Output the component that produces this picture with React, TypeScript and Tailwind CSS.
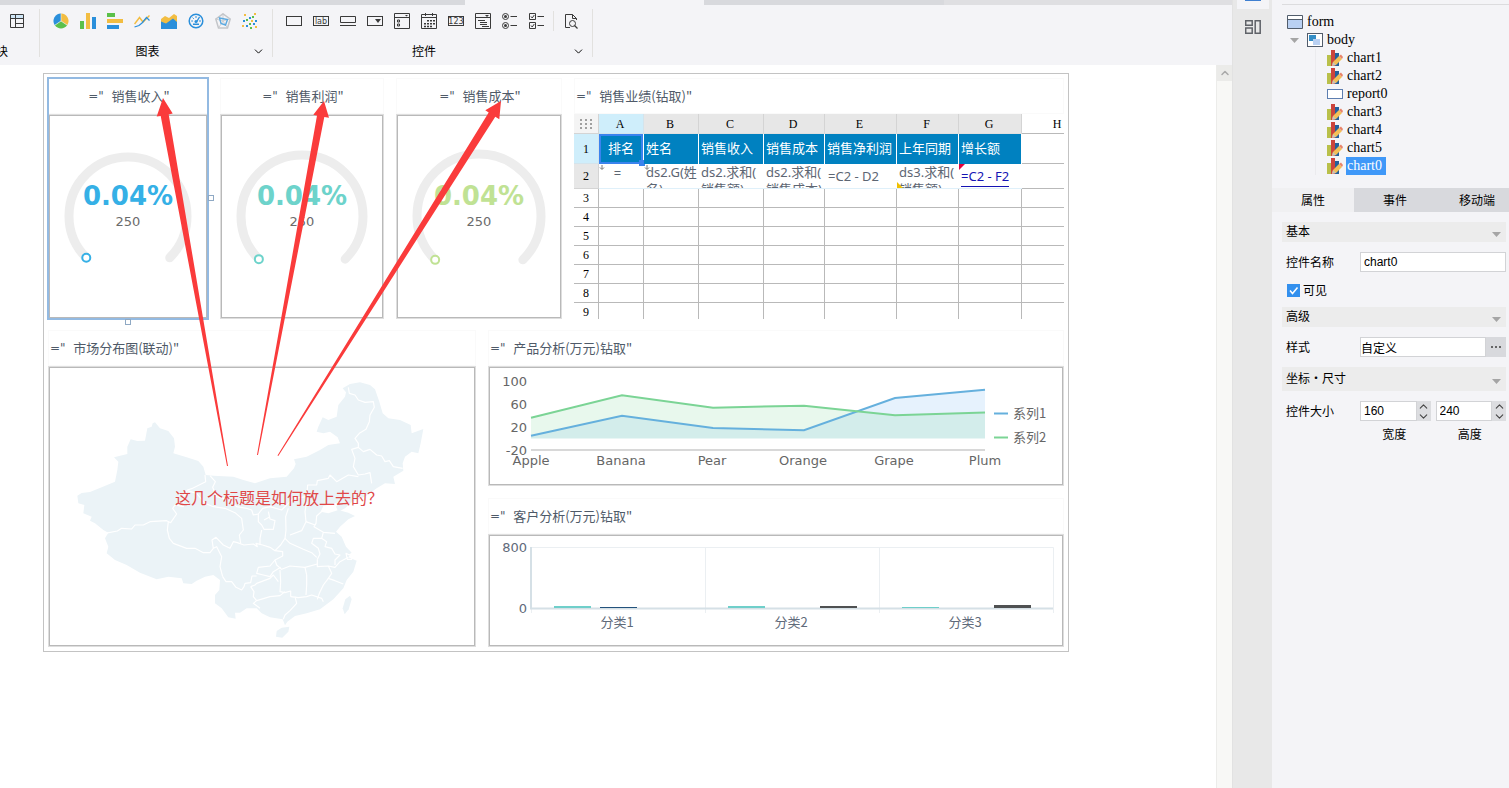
import React, { useState } from "react";
import { ChevronDown, ChevronUp } from "lucide-react";

const ink = "#3a3a3a";

function Ico({ children, label }: { children: React.ReactNode; label: string }) {
  return (
    <button type="button" aria-label={label} className="flex h-6 w-[27px] items-center justify-center">
      <svg width="16" height="16" viewBox="0 0 16 16" fill="none">
        {children}
      </svg>
    </button>
  );
}

function ChartIcons() {
  const blue = "#2a8fdb";
  const yellow = "#f2bd42";
  const green = "#5bc04a";
  return (
    <>
      <Ico label="饼图">
        <path d="M8 8 V0.5 A7.5 7.5 0 0 0 1.8 12.2 Z" fill={blue} />
        <path d="M8 8 V0.5 A7.5 7.5 0 0 1 14.2 12.2 Z" fill={yellow} />
        <path d="M8 8 L1.8 12.2 A7.5 7.5 0 0 0 14.2 12.2 Z" fill={green} />
        <path d="M8 0.5 V8 L1.8 12.2 M8 8 L14.2 12.2" stroke="#f4f4f7" strokeWidth="0.6" />
      </Ico>
      <Ico label="柱形图">
        <rect x="0" y="8" width="4" height="8" fill={green} />
        <rect x="6" y="0" width="4" height="16" fill={yellow} />
        <rect x="12" y="4" width="4" height="12" fill={blue} />
      </Ico>
      <Ico label="条形图">
        <rect x="0" y="0" width="8" height="4" fill={green} />
        <rect x="0" y="6" width="16" height="4" fill={yellow} />
        <rect x="0" y="12" width="12" height="4" fill={blue} />
      </Ico>
      <Ico label="折线图">
        <path d="M0.5 11 L5.500 4.500 L9 9 L15.500 2.500" stroke={yellow} strokeWidth="1.5" />
        <path d="M0.500 14 L5 12.500 L8 10 L12.500 4.500 L15.500 7.500" stroke={blue} strokeWidth="1.2" />
      </Ico>
      <Ico label="面积图">
        <path d="M0 6 L4 3 L8 5 L13 1 L16 3 V12 H0 Z" fill={yellow} />
        <path d="M0 8.5 L5 10.5 L12 5.5 L16 9 V16 H0 Z" fill={blue} />
      </Ico>
      <Ico label="仪表盘">
        <circle cx="8" cy="8" r="6.8" stroke={blue} strokeWidth="1.5" />
        <path d="M8 3 V5 M3.2 8 H5 M11 8 H13 M4.6 4.6 L5.8 5.8" stroke={blue} />
        <path d="M11.500 4 L8.500 9" stroke={blue} strokeWidth="1.4" />
        <rect x="5" y="10.500" width="6" height="1.500" fill={blue} />
        <circle cx="8" cy="8.500" r="1.500" fill={blue} />
      </Ico>
      <Ico label="雷达图">
        <path d="M8 0.8 L15.2 6 L12.5 15 H3.5 L0.8 6 Z" stroke="#c4c6ca" strokeWidth="1.5" />
        <path d="M8 0.8 V8 M15.2 6 L8 8 L12.5 15 M3.5 15 L8 8 L0.8 6" stroke="#c4c6ca" strokeWidth="0.8" />
        <path d="M4.500 5 L12.500 6.500 L10.500 12 L6 10.500 Z" stroke="#5aa9e0" strokeWidth="1.4" />
      </Ico>
      <Ico label="散点图">
        <path d="M7 4h2v2H7zM1 7h2v2H1zM11 10h2v2h-2zM13 7h2v2h-2zM4 12h2v2H4z" fill={blue} />
        <path d="M2 1h2v2H2zM12 0h2v2h-2zM9 7h2v2H9zM0 12h2v2H0zM13 13h2v2h-2z" fill={yellow} />
        <path d="M4 6h2v2H4zM7 10h2v2H7zM8 14h2v2H8zM10 3h2v2h-2z" fill={green} />
      </Ico>
    </>
  );
}

function ControlIcons() {
  return (
    <>
      <Ico label="文本">
        <rect x="0.5" y="3.5" width="15" height="9" stroke={ink} />
      </Ico>
      <Ico label="标签">
        <rect x="0.5" y="3.5" width="15" height="9" stroke={ink} />
        <text x="8" y="11" fontSize="8" textAnchor="middle" fill={ink} fontFamily="DejaVu Sans, sans-serif">lab</text>
      </Ico>
      <Ico label="按钮">
        <path d="M0.5 3.5 H15.5 V9.5 H0.5 Z M0 12.5 H16" stroke={ink} />
      </Ico>
      <Ico label="下拉框">
        <rect x="0.5" y="3.5" width="15" height="9" stroke={ink} />
        <path d="M8 6 H14 L11 10 Z" fill={ink} />
      </Ico>
      <Ico label="下拉复选框">
        <path d="M0.5 0.5 H15.5 V15.5 H0.5 Z M0.5 4.5 H15.5" stroke={ink} />
        <path d="M11 2 H14 L12.5 3.5 Z" fill={ink} />
        <path d="M3.5 7 h2 v2 h-2 z M3.5 11 h2 v2 h-2 z" stroke={ink} />
      </Ico>
      <Ico label="日期">
        <path d="M0.5 1.5 H15.5 V15.5 H0.5 Z M0.5 4.5 H15.5 M4.5 0 V3 M11.5 0 V3" stroke={ink} />
        <path d="M6 7h2v1.5H6zM9 7h2v1.5H9zM12 7h2v1.5h-2zM3 10h2v1.5H3zM6 10h2v1.5H6zM9 10h2v1.5H9zM12 10h2v1.5h-2zM3 12.7h2v1.5H3zM6 12.7h2v1.5H6zM9 12.7h2v1.5H9z" fill={ink} />
      </Ico>
      <Ico label="数字">
        <rect x="0.5" y="3.5" width="15" height="9" stroke={ink} />
        <text x="8" y="11" fontSize="8" textAnchor="middle" fill={ink} fontFamily="DejaVu Sans, sans-serif">123</text>
      </Ico>
      <Ico label="下拉树">
        <path d="M0.5 0.5 H15.5 V15.5 H0.5 Z M0.5 4.5 H15.5 M3 7.5 H10 M5 9.5 H12 M5 11.5 H12 M7 13.5 H14" stroke={ink} />
        <path d="M10 2 H14 L12 4 Z" fill={ink} />
      </Ico>
      <Ico label="单选按钮组">
        <circle cx="3.5" cy="3.5" r="3" stroke={ink} />
        <circle cx="3.5" cy="3.5" r="1.5" fill={ink} />
        <circle cx="3.5" cy="12.5" r="3" stroke={ink} />
        <circle cx="3.5" cy="12.5" r="1.5" fill={ink} />
        <path d="M8.5 3.5 H15 M8.5 12.5 H15" stroke={ink} />
      </Ico>
      <Ico label="复选框组">
        <path d="M0.5 0.5 h6 v6 h-6 z M0.5 9.5 h6 v6 h-6 z M8.5 3.5 H15 M8.5 12.5 H15 M2 3.5 L3.2 5 L5.3 2 M2 12.5 L3.2 14 L5.3 11" stroke={ink} />
      </Ico>
    </>
  );
}

function Toolbar() {
  return (
    <div className="shrink-0 bg-[#f4f4f7]">
      <div className="flex h-[5px]">
        <div className="w-[465px] bg-[#d8d9dd]" />
        <div className="w-[239px]" />
        <div className="w-60 bg-[#d8d9dd]" />
        <div className="flex-1 bg-[#dfdfe2]" />
      </div>
      <div className="flex h-[60px] pt-1 pb-2 text-xs text-black">
        <div className="flex w-10 flex-col gap-3 border-r border-[#e2e1df]">
          <div className="flex pl-[3px]">
            <Ico label="报表块">
              <rect x="1.5" y="1.5" width="13" height="4.500" fill="#cfe6f7" />
              <path d="M1.500 1.500 H14.500 V14.500 H1.500 Z M1.500 5.500 H14.500 M6.500 1.500 V14.500 M6.500 10.500 H14.500" stroke={ink} />
            </Ico>
          </div>
          <div className="-ml-1 flex h-3 items-center">块</div>
        </div>
        <div className="flex w-[233px] flex-col gap-3 border-r border-[#e2e1df] px-[7px]">
          <div className="flex h-6 items-center">
            <ChartIcons />
          </div>
          <div className="flex h-3 items-center">
            <span className="flex-1 pr-1 text-center">图表</span>
            <button type="button" aria-label="更多图表">
              <ChevronDown size={13} strokeWidth={1.75} />
            </button>
          </div>
        </div>
        <div className="flex w-80 flex-col gap-3 border-r border-[#e2e1df] px-[7px]">
          <div className="flex h-6 items-center">
            <ControlIcons />
            <div className="mx-[3px] h-5 w-px bg-[#e2e1df]" />
            <Ico label="预览">
              <path d="M7 14.500 H2.500 V1.500 H9.500 L13.500 5.500 V7 M9.500 1.500 V5.500 H13.500" stroke={ink} />
              <circle cx="9.5" cy="10.500" r="3" stroke={ink} />
              <path d="M11.500 12.500 L14.500 15.500" stroke={ink} strokeWidth="1.300" />
            </Ico>
          </div>
          <div className="flex h-3 items-center">
            <span className="flex-1 pr-1 text-center">控件</span>
            <button type="button" aria-label="更多控件">
              <ChevronDown size={13} strokeWidth={1.75} />
            </button>
          </div>
        </div>
      </div>
    </div>
  );
}

function Title({ text, center = false }: { text: string; center?: boolean }) {
  return (
    <h2
      className={`flex h-9 shrink-0 items-center border border-[#fafafa] text-[13px] whitespace-pre text-[#4f5a68] ${
        center ? "justify-center pl-0.5" : "pl-px"
      }`}
    >
      <span className="font-['DejaVu_Sans','Noto_Sans_CJK_SC',sans-serif] text-xs">{'="  '}</span>
      <span>{text}"</span>
    </h2>
  );
}

function Box({ children }: { children: React.ReactNode }) {
  return (
    <div className="relative min-h-0 flex-1 border border-[#dedede]">
      <div className="h-full border border-[#b9b9b9]">{children}</div>
    </div>
  );
}

function Gauge({ title, color, width, cx, r, selected = false }: {
  title: string; color: string; width: number; cx: number; r: number; selected?: boolean;
}) {
  const cy = 100;
  const d = r * 0.7071;
  return (
    <section className="relative flex flex-col">
      <Title text={title} center />
      <Box>
        <svg className="h-full w-full" viewBox={`0 0 ${width} 201`} fontFamily="DejaVu Sans, sans-serif" textAnchor="middle">
          <path
            d={`M${cx - d} ${cy + d} A${r} ${r} 0 1 1 ${cx + d} ${cy + d}`}
            fill="none" stroke="#ededed" strokeWidth="9" strokeLinecap="round"
          />
          <circle cx={cx - d} cy={cy + d} r="4" fill="#fff" stroke={color} strokeWidth="2" />
          <text x={cx} y="89" fontSize="26" fontWeight="bold" fill={color}>0.04%</text>
          <text x={cx} y="110" fontSize="13" fill="#6b6b6b">250</text>
        </svg>
      </Box>
      {selected && (
        <>
          <div className="pointer-events-none absolute -inset-px border-2 border-[#93bae2]" />
          <div className="absolute top-[117px] -right-1.5 size-1.5 border border-[#8fa9c4] bg-white" />
          <div className="absolute -bottom-1.5 left-[77px] size-1.5 border border-[#8fa9c4] bg-white" />
        </>
      )}
    </section>
  );
}

const columns = ["A", "B", "C", "D", "E", "F", "G", "H"];
const headings = ["排名", "姓名", "销售收入", "销售成本", "销售净利润", "上年同期", "增长额"];

function DownMark() {
  return (
    <svg className="absolute top-0 left-0" width="6" height="7" viewBox="0 0 6 7">
      <path d="M3 1 V5 M1 3.500 L3 5.500 L5 3.500" stroke="#777" fill="none" />
    </svg>
  );
}

function Two({ a, b }: { a: string; b: string }) {
  return (
    <div className="h-6 overflow-hidden pl-0.5 leading-[17px] whitespace-nowrap">
      {a}
      <br />
      {b}
    </div>
  );
}

function Report() {
  const headCell = "h-5 border-r border-b border-r-[#d4d4d4] border-b-[#e0e0e0] bg-[#e7e7e7] p-0 pr-0.5 font-normal";
  const cell = "relative h-[25px] border-b border-[#dff0fa] p-0 align-top";
  return (
    <section className="flex min-w-0 flex-col">
      <Title text="销售业绩(钻取)" />
      <div className="h-[205px] overflow-hidden">
        <table className="w-[520px] table-fixed border-separate border-spacing-0 text-[13px] text-[#5d6673]">
          <colgroup>
            <col className="w-[25px]" />
            <col className="w-[45px]" />
            <col className="w-[55px]" />
            <col className="w-[65px]" />
            <col className="w-[61px]" />
            <col className="w-[72px]" />
            <col className="w-[62px]" />
            <col className="w-[63px]" />
            <col className="w-[72px]" />
          </colgroup>
          <thead className="font-['Liberation_Serif',serif] text-xs leading-4 text-black">
            <tr>
              <td className="h-5 border-r border-b border-[#d4d4d4] bg-[#f4f4f4] p-0">
                <svg className="mx-auto" width="12" height="10" viewBox="0 0 12 10" fill="#a0a0a0">
                  <path d="M0 0h2v2H0zM5 0h2v2H5zM10 0h2v2h-2zM0 4h2v2H0zM5 4h2v2H5zM10 4h2v2h-2zM0 8h2v2H0zM5 8h2v2H5zM10 8h2v2h-2z" />
                </svg>
              </td>
              {columns.map((c) =>
                c === "A" ? (
                  <th key={c} scope="col" className="h-5 border-r border-b border-[#d4e4ec] bg-[#cfeefb] p-0 pr-0.5 font-medium">{c}</th>
                ) : c === "H" ? (
                  <th key={c} scope="col" className="h-5 border-b border-[#b9b9b9] p-0 pr-0.5 font-normal">{c}</th>
                ) : (
                  <th key={c} scope="col" className={headCell}>{c}</th>
                ),
              )}
            </tr>
          </thead>
          <tbody className="font-['Noto_Sans','Noto_Sans_CJK_SC',sans-serif]">
            <tr className="text-white">
              <th scope="row" className="h-[30px] border-r border-b border-[#d4e4ec] bg-[#cfeefb] p-0 font-['Liberation_Serif',serif] text-xs font-normal text-black">1</th>
              {headings.map((h, i) => (
                <td
                  key={h}
                  className={`relative h-[30px] border-r border-white bg-[#0081c0] p-0 whitespace-nowrap ${i === 0 ? "text-center" : "pl-0.5"}`}
                >
                  {h}
                  {i === 0 && (
                    <>
                      <div className="absolute inset-0 border-2 border-[#3a83ee]" />
                      <div className="absolute -right-0.5 -bottom-0.5 size-1.5 bg-[#3a83ee]" />
                    </>
                  )}
                </td>
              ))}
              <td className="border-b border-[#b9b9b9]" />
            </tr>
            <tr>
              <th scope="row" className="h-[25px] border-r border-b border-[#d4d4d4] bg-[#e7e7e7] p-0 font-['Liberation_Serif',serif] text-xs font-normal text-black">2</th>
              <td className={cell}>
                <DownMark />
                <div className="pr-2 text-center leading-[18px]">=</div>
              </td>
              <td className={cell}>
                <DownMark />
                <Two a="ds2.G(姓" b="名)" />
              </td>
              <td className={cell}><Two a="ds2.求和(" b="销售额)" /></td>
              <td className={cell}><Two a="ds2.求和(" b="销售成本)" /></td>
              <td className={cell}><div className="pl-[3px] leading-6">=C2 - D2</div></td>
              <td className={cell}>
                <Two a="ds3.求和(" b="销售额)" />
                <svg className="absolute bottom-0 left-0" width="6" height="6"><path d="M0 0 L6 6 H0 Z" fill="#f0c000" /></svg>
              </td>
              <td className={cell}>
                <svg className="absolute top-0 left-0" width="6" height="6"><path d="M0 0 H6 L0 6 Z" fill="#e6003c" /></svg>
                <span className="ml-0.5 inline-block h-[23px] border-b border-[#1414b4] leading-6 whitespace-nowrap text-[#1414b4]">=C2 - F2</span>
              </td>
              <td className="border-b border-[#b9b9b9]" />
            </tr>
            {[3, 4, 5, 6, 7, 8, 9].map((n) => (
              <tr key={n}>
                <th scope="row" className="h-[19px] border-r border-b border-[#b9b9b9] p-0 font-['Liberation_Serif',serif] text-xs leading-4 font-normal text-black">{n}</th>
                {headings.map((h) => (
                  <td key={h} className="border-r border-b border-[#b9b9b9] p-0" />
                ))}
                <td className="border-b border-[#b9b9b9] p-0" />
              </tr>
            ))}
          </tbody>
        </table>
      </div>
    </section>
  );
}

function ChinaMap() {
  return (
    <svg className="h-full w-full" viewBox="30 114 1272 831" role="img" aria-label="中国地图">
      <g fill="#ebf3f7">
        <path d="M112 497 L125 489 150 486 185 472 225 455 232 420 235 395 222 382 262 372 262 350 272 328 292 333 315 332 322 295 335 290 338 280 345 277 350 283 360 295 385 303 402 325 405 350 400 370 440 382 475 393 490 410 497 435 520 437 580 440 610 450 645 460 690 445 740 440 762 415 767 402 762 388 800 380 840 360 865 345 900 340 893 322 870 305 850 310 830 305 835 290 848 262 865 270 890 260 895 225 915 200 918 187 908 175 930 162 960 157 990 165 1005 178 1018 215 1028 250 1045 265 1080 270 1112 285 1115 310 1150 297 1142 340 1135 370 1115 365 1095 380 1088 400 1090 422 1060 440 1065 462 1035 460 1010 475 975 500 940 512 915 535 895 545 888 530 900 515 875 522 850 528 842 545 865 550 895 540 925 548 945 558 925 568 900 590 888 605 905 620 918 650 935 668 925 682 950 692 940 725 920 750 910 775 880 808 840 838 800 850 765 858 742 875 735 886 728 868 690 862 665 850 650 835 620 835 600 848 585 848 587 866 565 862 545 835 525 820 525 795 538 780 540 750 520 735 495 740 470 752 455 762 430 760 425 745 385 740 350 748 300 728 260 705 225 690 200 670 205 650 195 625 205 608 190 600 165 580 150 572 155 560 130 550 133 525 115 520 Z" />
        <path d="M930 797 L935 808 926 838 914 853 908 835 916 808 Z" />
        <path d="M725 893 L748 890 745 905 727 923 708 920 710 903 Z" />
      </g>
      <g fill="none" stroke="#fff" strokeWidth="3.5" strokeLinejoin="round">
        <path d="M195 610 L232 603 245 595 275 597 285 585 310 585 330 575 380 572 392 578 410 552 398 535 405 525 430 530 430 500 442 480 455 476 497 455 495 435" />
        <path d="M385 575 L382 600 388 625 400 640 440 655 465 655 490 668 510 668 520 655 530 650 545 680 540 710 548 740" />
        <path d="M520 655 L516 630 528 622 550 645 570 655 580 635 592 638 612 645 640 642 652 650 648 640 668 645 690 652" />
        <path d="M442 482 L470 490 495 520 520 530 555 535 585 548 605 565 610 600 598 615 602 640" />
        <path d="M510 437 L526 455 518 472 530 500 570 510 590 530 620 535 M620 535 L635 540 640 555 655 552 655 575 665 585 672 598 700 598 705 572 690 567 685 545 M665 600 L660 625 660 645" />
        <path d="M672 570 L690 560 M655 552 L668 535 690 530 725 540 745 520 760 505 800 500 803 465 830 465 832 452 865 445 870 435 890 455 925 435 955 440" />
        <path d="M745 535 L737 560 738 600 735 625 722 645 705 662 690 652 M750 615 L785 602 798 575 795 545 800 515" />
        <path d="M798 575 L825 585 M870 540 L850 540 830 558 828 580 822 590 850 607 885 610" />
        <path d="M735 625 L750 640 790 658 815 668 830 682 M850 607 L845 625 820 625 815 640 835 655 840 672 832 688 M845 625 L860 635 855 650 875 655 885 672 900 675 885 690 885 705" />
        <path d="M832 688 L832 710 865 708 885 712 900 695 925 682 M865 708 L875 730 865 745 885 752 910 762" />
        <path d="M705 662 L728 665 728 678 705 690 710 705 725 718 750 708 795 712 832 702 M795 712 L800 735 800 765 798 795 M865 745 L850 765 838 790 832 808" />
        <path d="M705 690 L690 708 655 712 650 730 670 735 690 740 700 725 722 712 M720 720 L722 755 720 785 735 788 752 783 752 800" />
        <path d="M548 740 L558 755 575 755 588 772 605 780 612 770 615 760 632 758 636 738 650 738 M632 770 L645 765 650 760 690 745 700 735 715 755" />
        <path d="M632 770 L642 785 640 800 650 812 640 820 660 835 M650 812 L690 800 720 797 735 785 M752 800 L775 803 800 800 815 795 845 805 850 815 M765 800 L770 820 750 842 735 855 730 868" />
        <path d="M925 172 L928 190 945 195 955 210 975 217 1000 215 1003 232 990 255 988 275 978 298 958 310 945 325 955 340 955 352" />
        <path d="M955 352 L970 365 990 358 1010 375 1025 378 1035 395 1048 392 1060 410 1088 415 M955 352 L935 358 945 385 940 410 955 435 975 432 990 428 995 460" />
        <path d="M918 670 L928 675 938 668 935 688 922 688 Z" />
      </g>
    </svg>
  );
}

const lineLabels: [number, string][] = [[531, "Apple"], [621, "Banana"], [712, "Pear"], [803, "Orange"], [894, "Grape"], [985, "Plum"]];
const lineTicks: [number, string][] = [[386, "100"], [409, "60"], [432, "20"], [455, "-20"]];

function LineChart() {
  return (
    <svg className="h-full w-full" viewBox="490 368 572 116" fontFamily="DejaVu Sans, Noto Sans CJK SC, sans-serif" fontSize="13" fill="#666">
      <path d="M531 435.700 L622 415.700 713 428 804 430.300 895 398 985 389.700 V438.500 H531 Z" fill="#62b0f5" fillOpacity="0.160" />
      <path d="M531 417.700 L622 395.300 713 407.700 804 405.700 895 415.300 985 412.500 V438.500 H531 Z" fill="#70d490" fillOpacity="0.160" />
      <path d="M531 450 H985" stroke="#d8d8d8" strokeWidth="2" />
      <path d="M531 435.700 L622 415.700 713 428 804 430.300 895 398 985 389.700" fill="none" stroke="#65b0dd" strokeWidth="2" />
      <path d="M531 417.700 L622 395.300 713 407.700 804 405.700 895 415.300 985 412.500" fill="none" stroke="#7bd495" strokeWidth="2" />
      <g textAnchor="end">
        {lineTicks.map(([y, t]) => <text key={t} x="527" y={y}>{t}</text>)}
      </g>
      <g textAnchor="middle">
        {lineLabels.map(([x, t]) => <text key={t} x={x} y="465">{t}</text>)}
      </g>
      <path d="M994 413.500 H1008" stroke="#65b0dd" strokeWidth="2" />
      <path d="M994 437.500 H1008" stroke="#7bd495" strokeWidth="2" />
      <g fontFamily="Noto Sans CJK SC, sans-serif">
        <text x="1013" y="418">系列1</text>
        <text x="1013" y="442">系列2</text>
      </g>
    </svg>
  );
}

function BarChart() {
  return (
    <svg className="h-full w-full" viewBox="490 536 572 109" fontFamily="Noto Sans CJK SC, sans-serif" fontSize="13" fill="#5f6a7a">
      <path d="M531 547.500 H1053.500 V613 M705.500 547.500 V613 M879.500 547.500 V613 M531.500 608 V613" fill="none" stroke="#ebeff2" />
      <path d="M531 547 V608.500 H1053" fill="none" stroke="#d5e0e6" strokeWidth="2" />
      <g fill="#6fcfca">
        <rect x="554" y="606" width="37" height="2" />
        <rect x="728" y="606" width="37" height="2" />
        <rect x="902" y="607" width="37" height="1" />
      </g>
      <rect x="600" y="607" width="37" height="1" fill="#23527c" />
      <rect x="820" y="606" width="37" height="2" fill="#4f5152" />
      <rect x="994" y="605" width="37" height="3" fill="#4f5152" />
      <g textAnchor="end" fontFamily="DejaVu Sans, sans-serif">
        <text x="527" y="552">800</text>
        <text x="527" y="613">0</text>
      </g>
      <g textAnchor="middle">
        <text x="617" y="627">分类1</text>
        <text x="791" y="627">分类2</text>
        <text x="965" y="627">分类3</text>
      </g>
    </svg>
  );
}

function Annotations() {
  return (
    <>
      <svg className="pointer-events-none absolute top-0 left-0" width="560" height="420" viewBox="0 65 560 420" fill="#fa3b3b">
        <path d="M227 466 L160.700 116 156.700 116.500 163 98 172.700 113.500 168.700 114.500 228 466 Z" />
        <path d="M257 455 L317 115.500 313.300 114.700 324 101 329 117.700 324.300 117 258 455 Z" />
        <path d="M277.500 455.500 L488.700 112.500 485.300 110.300 501 101 499.300 119.300 495.300 116.700 278.300 456 Z" />
      </svg>
      <p className="absolute top-[420px] left-[175px] text-base leading-6 whitespace-nowrap text-[#e04848]">这几个标题是如何放上去的？</p>
    </>
  );
}

function Canvas() {
  return (
    <main className="flex min-h-0 flex-1">
      <div className="relative min-w-0 flex-1 overflow-hidden bg-white pt-2 pl-[43px]">
        <div className="flex w-full max-w-[1026px] flex-col gap-[11px] border border-[#c3c3c3] p-1">
          <div className="grid h-[241px] grid-cols-[160fr_164fr_166fr_490fr] gap-3">
            <Gauge title="销售收入" color="#35b0e6" width={156} cx={78} r={59} selected />
            <Gauge title="销售利润" color="#6dd3cb" width={160} cx={80} r={61} />
            <Gauge title="销售成本" color="#c0e294" width={162} cx={81} r={62} />
            <Report />
          </div>
          <div className="grid h-[317px] grid-cols-[428fr_576fr] gap-3">
            <section className="flex flex-col">
              <Title text="市场分布图(联动)" />
              <Box><ChinaMap /></Box>
            </section>
            <div className="flex flex-col gap-3">
              <section className="flex h-[156px] flex-col">
                <Title text="产品分析(万元)钻取" />
                <Box><LineChart /></Box>
              </section>
              <section className="flex flex-1 flex-col">
                <Title text="客户分析(万元)钻取" />
                <Box><BarChart /></Box>
              </section>
            </div>
          </div>
        </div>
        <Annotations />
      </div>
      <div className="w-4 shrink-0 border-l border-[#ececea] bg-[#f8f8f6]">
        <button type="button" aria-label="向上滚动" className="flex h-4 w-full items-center justify-center bg-[#ebebe9] text-[#a9a9a9]">
          <ChevronUp size={12} strokeWidth={3} />
        </button>
      </div>
    </main>
  );
}

function ChartNodeIcon() {
  return (
    <svg width="16" height="16" viewBox="0 0 16 16">
      <rect x="0" y="5" width="5" height="11" fill="#b9c04a" />
      <rect x="8" y="3" width="4" height="13" fill="#23609c" />
      <rect x="4" y="0" width="4" height="16" fill="#cc443c" />
      <path d="M6 12 L12 6 L15 9 L9 15 L5 15.500 Z" fill="#f3bf57" />
      <path d="M12 6 L14 4.500 L16 7 L15 9 Z" fill="#e8836a" />
      <path d="M6 12 L9 15 L5 16 Z" fill="#c9c3bd" />
    </svg>
  );
}

function Tree() {
  const [selected, setSelected] = useState("chart0");
  const nodes = ["chart1", "chart2", "report0", "chart3", "chart4", "chart5", "chart0"];
  return (
    <div className="font-['Liberation_Serif',serif] text-sm leading-[18px] text-black">
      <div className="flex h-[18px] items-center gap-1 pl-[5px]">
        <svg width="16" height="14" viewBox="0 0 16 14">
          <path d="M0.500 0.500 H15.500 V13.500 H0.500 Z" fill="#b9d0f2" stroke="#515c6b" />
          <path d="M1 1 H15 V4 H1 Z" fill="#fff" />
          <path d="M0 4.500 H16" stroke="#515c6b" />
        </svg>
        form
      </div>
      <div className="flex h-[18px] items-center gap-1 pl-2">
        <svg className="mr-1" width="9" height="5" viewBox="0 0 9 5"><path d="M0 0 H9 L4.500 5 Z" fill="#a5a5a5" /></svg>
        <svg width="16" height="14" viewBox="0 0 16 14">
          <rect x="0.5" y="0.5" width="15" height="13" fill="#fff" stroke="#515c6b" />
          <rect x="2" y="2" width="7" height="6" fill="#338dc6" />
          <rect x="6" y="6" width="7" height="6" fill="#b9d0f2" />
        </svg>
        body
      </div>
      <ul className="ml-[33px] border-l border-[#ebebee] pl-[11px]">
        {nodes.map((n) => (
          <li key={n} className="flex h-[18px] items-center gap-[3px]">
            {n === "report0" ? (
              <svg width="16" height="16" viewBox="0 0 16 16"><rect x="0.5" y="3.5" width="15" height="9" fill="#fff" stroke="#5c7eb0" /></svg>
            ) : (
              <ChartNodeIcon />
            )}
            <button
              type="button"
              onClick={() => setSelected(n)}
              className={`h-[18px] px-px pr-1 ${selected === n ? "bg-[#3f98f8] text-white" : ""}`}
            >
              {n}
            </button>
          </li>
        ))}
      </ul>
    </div>
  );
}

function SectionBar({ children }: { children: React.ReactNode }) {
  return (
    <button type="button" className="flex h-5 w-full items-center justify-between bg-[#ececec] pr-[5px] pl-1">
      <span className="h-5">{children}</span>
      <svg className="mt-1" width="9" height="5" viewBox="0 0 9 5"><path d="M0 0 H9 L4.500 5 Z" fill="#a5a5a5" /></svg>
    </button>
  );
}

const inputClass = "h-5 min-w-0 border border-[#d2d3d6] bg-white font-['Liberation_Sans','Noto_Sans_CJK_SC',sans-serif] text-xs text-black outline-none";

function Spinner({ id, value, label }: { id: string; value: string; label: string }) {
  return (
    <div className="flex min-w-0 flex-1 flex-col">
      <div className="flex">
        <input id={id} defaultValue={value} className={`${inputClass} flex-1 pl-[3px]`} />
        <div className="flex h-5 w-3.5 flex-col items-center justify-between bg-[#dcdde0] text-[#444]">
          <button type="button" aria-label={`${label}增加`} className="flex h-2.5 items-center"><ChevronUp size={13} /></button>
          <button type="button" aria-label={`${label}减少`} className="flex h-2.5 items-center"><ChevronDown size={13} /></button>
        </div>
      </div>
      <label htmlFor={id} className="mt-1 pr-0.5 text-center leading-[18px]">{label}</label>
    </div>
  );
}

function Properties() {
  const [visible, setVisible] = useState(true);
  return (
    <form className="pt-2.5 pr-[3px] pl-2.5 text-xs leading-[18px] text-black">
      <SectionBar>基本</SectionBar>
      <div className="mt-2.5 flex h-5 items-center pl-1">
        <label htmlFor="name" className="w-[74px] shrink-0">控件名称</label>
        <input id="name" defaultValue="chart0" className={`${inputClass} flex-1 pl-[3px]`} />
      </div>
      <label className="mt-2.5 flex h-4 items-center gap-[3px] pl-[5px]">
        <span className="relative flex size-[13px]">
          <input
            type="checkbox"
            checked={visible}
            onChange={(e) => setVisible(e.target.checked)}
            className="size-[13px] appearance-none border border-[#3390ee] bg-white checked:bg-[#3390ee]"
          />
          {visible && (
            <svg className="pointer-events-none absolute inset-0" width="13" height="13" viewBox="0 0 13 13">
              <path d="M3 6.500 L5.500 9.500 L10.500 3.500" fill="none" stroke="#fff" strokeWidth="1.500" />
            </svg>
          )}
        </span>
        可见
      </label>
      <div className="mt-[9px]"><SectionBar>高级</SectionBar></div>
      <div className="mt-2.5 flex h-5 items-center pl-1">
        <label htmlFor="style" className="w-[74px] shrink-0">样式</label>
        <input id="style" defaultValue="自定义" className={`${inputClass} flex-1`} />
        <button type="button" aria-label="编辑样式" className="flex h-5 w-5 items-center justify-center gap-0.5 bg-[#d8d9dd]">
          <span className="size-0.5 bg-[#666]" />
          <span className="size-0.5 bg-[#666]" />
          <span className="size-0.5 bg-[#666]" />
        </button>
      </div>
      <div className="mt-2.5 bg-[#ececec] py-0.5"><SectionBar>坐标·尺寸</SectionBar></div>
      <div className="mt-2.5 flex pl-1">
        <span className="w-[74px] shrink-0 leading-5">控件大小</span>
        <div className="flex min-w-0 flex-1 gap-[5px]">
          <Spinner id="width" value="160" label="宽度" />
          <Spinner id="height" value="240" label="高度" />
        </div>
      </div>
    </form>
  );
}

function SidePanel() {
  const [tab, setTab] = useState("属性");
  return (
    <aside className="w-[237px] shrink-0 overflow-hidden bg-[#f4f4f7]">
      <div className="h-[188px] pt-1 pl-2.5">
        <div className="h-[9px] border-t border-[#dcdcde]" />
        <Tree />
      </div>
      <div className="flex text-xs text-black">
        {["属性", "事件", "移动端"].map((t) => (
          <button
            key={t}
            type="button"
            onClick={() => setTab(t)}
            className={`h-6 w-[82px] shrink-0 ${tab === t ? "bg-[#f0f0f2]" : "bg-[#d8d9dd]"}`}
          >
            {t}
          </button>
        ))}
      </div>
      <Properties />
    </aside>
  );
}

export default function App() {
  return (
    <div className="flex h-screen overflow-hidden font-['Noto_Sans_CJK_SC',sans-serif]">
      <div className="flex min-w-0 flex-1 flex-col">
        <Toolbar />
        <Canvas />
      </div>
      <nav className="flex w-10 shrink-0 flex-col items-center gap-[11px] border-l border-[#e2e2e2] bg-[#e8e8e8]">
        <div className="flex h-[9px] w-8 justify-center bg-[#f4f4f7]">
          <div className="h-px w-4 bg-[#3f7fd0]" />
        </div>
        <button type="button" aria-label="组件">
          <svg width="16" height="14" viewBox="0 0 16 14" fill="none" stroke="#5f6268" strokeWidth="1.500">
            <path d="M0.700 0.700 h6.500 v4.600 h-6.500 z M0.700 8 h6.500 v5.300 h-6.500 z M10.200 0.700 h5 v12.600 h-5 z" />
          </svg>
        </button>
      </nav>
      <SidePanel />
    </div>
  );
}
